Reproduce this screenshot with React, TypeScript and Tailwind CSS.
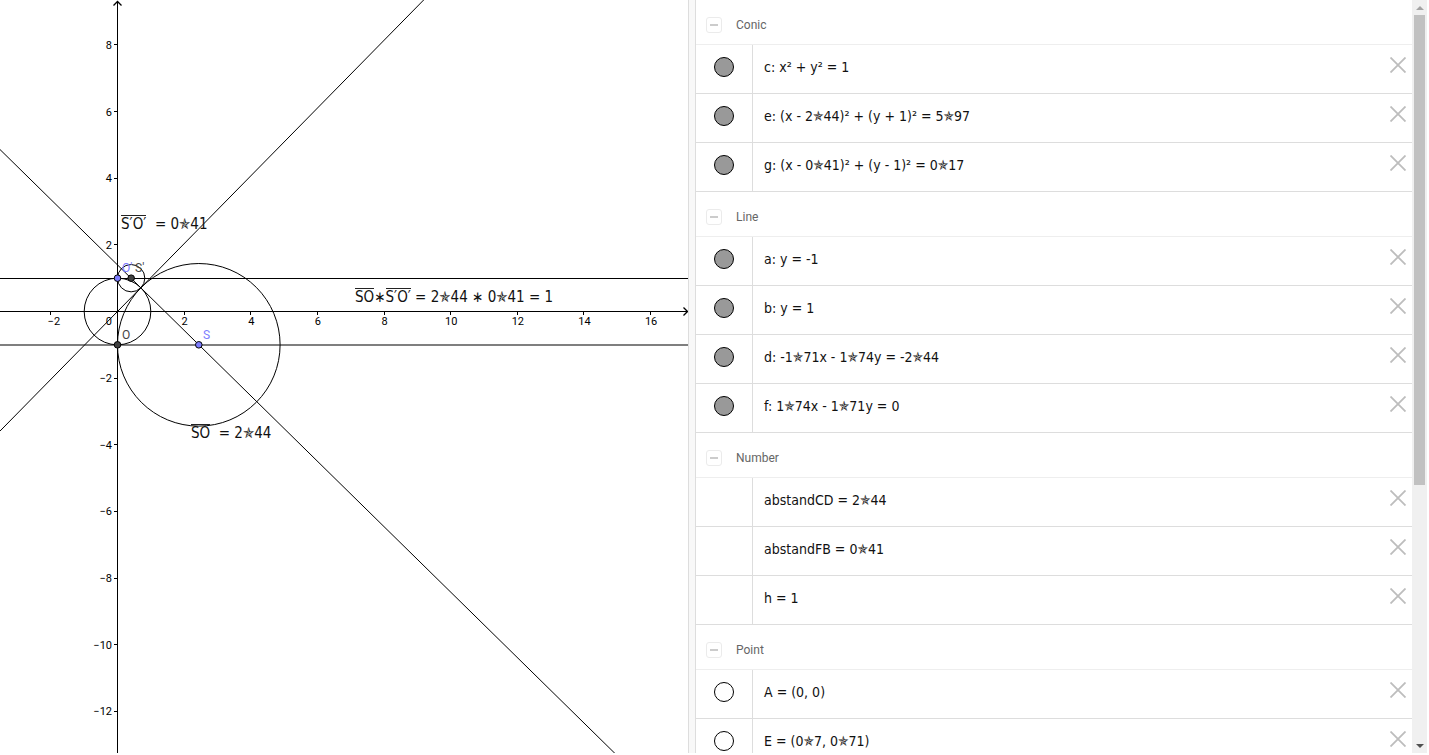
import type { ReactNode } from "react";

interface Item {
  text: string;
  shown?: boolean;
}

interface Group {
  title: string;
  items: Item[];
}

const GROUPS: Group[] = [
  {
    title: "Conic",
    items: [
      { text: "c: x² + y² = 1", shown: true },
      { text: "e: (x - 2✯44)² + (y + 1)² = 5✯97", shown: true },
      { text: "g: (x - 0✯41)² + (y - 1)² = 0✯17", shown: true },
    ],
  },
  {
    title: "Line",
    items: [
      { text: "a: y = -1", shown: true },
      { text: "b: y = 1", shown: true },
      { text: "d: -1✯71x - 1✯74y = -2✯44", shown: true },
      { text: "f: 1✯74x - 1✯71y = 0", shown: true },
    ],
  },
  {
    title: "Number",
    items: [{ text: "abstandCD = 2✯44" }, { text: "abstandFB = 0✯41" }, { text: "h = 1" }],
  },
  {
    title: "Point",
    items: [
      { text: "A = (0, 0)", shown: false },
      { text: "E = (0✯7, 0✯71)", shown: false },
    ],
  },
];

// Graphics view: origin and pixels per unit.
const OX = 117.5;
const OY = 311.5;
const UNIT = 33.32;
const px = (x: number) => OX + x * UNIT;
const py = (y: number) => OY - y * UNIT;
const crisp = (v: number) => Math.floor(v) + 0.5;

const X_TICKS = [-2, 2, 4, 6, 8, 10, 12, 14, 16];
const Y_TICKS = [8, 6, 4, 2, -2, -4, -6, -8, -10, -12];

const tickLabel = (n: number) => String(n).replace("-", "−");

const FORMULA = "whitespace-pre font-['DejaVu_Sans_Condensed','DejaVu_Sans',sans-serif] text-[#111]";

function Over({ children }: { children: ReactNode }) {
  return <span className="inline-block border-t border-[#222] leading-4">{children}</span>;
}

function Plot() {
  return (
    <svg className="absolute inset-0 h-full w-full" fill="none" stroke="#000">
      {/* axes */}
      <path d={`M${OX} 2V2000M0 ${OY}H4000`} />
      <path d="M113.5 5.5L117.5 1.5L121.5 5.5" strokeWidth="1.3" />
      {X_TICKS.map((n) => (
        <path key={n} d={`M${crisp(px(n))} ${OY}v3.5`} />
      ))}
      {Y_TICKS.map((n) => (
        <path key={n} d={`M${OX} ${crisp(py(n))}h-3.5`} />
      ))}
      <g className="font-[Roboto,sans-serif] text-[11px]" fill="#000" stroke="none">
        {X_TICKS.map((n) => (
          <text key={n} x={n < 0 ? px(n) + 3 : px(n) + 0.5} y="325" textAnchor="middle">
            {tickLabel(n)}
          </text>
        ))}
        {Y_TICKS.map((n) => (
          <text key={n} x="112" y={py(n) + 4} textAnchor="end">
            {tickLabel(n)}
          </text>
        ))}
        <text x="112" y="325" textAnchor="end">
          0
        </text>
      </g>

      <circle cx={OX} cy={OY} r={UNIT} />
      <circle cx={px(2.44)} cy={py(-1)} r={2.44 * UNIT} />
      <circle cx={px(0.41)} cy={py(1)} r={0.41 * UNIT} />
      <path d="M0 278.5H4000" />
      <path d="M0 345H4000" strokeWidth="1.2" />
      <line x1="0" y1={py(1.398 + (OX / UNIT) * 0.982)} x2={px(40)} y2={py(1.398 - 40 * 0.982)} />
      <line x1="0" y1={py((-OX / UNIT) * 1.0175)} x2={px(40)} y2={py(40 * 1.0175)} />

      <circle cx={px(0.41)} cy={py(1)} r="3.3" fill="#404040" />
      <circle cx={OX} cy={py(1)} r="3.3" fill="#7d7dff" />
      <circle cx={OX} cy={py(-1)} r="3.3" fill="#404040" />
      <circle cx={px(2.44)} cy={py(-1)} r="3.3" fill="#7d7dff" />

      <g className="font-[Roboto,sans-serif] text-[12px]" stroke="none">
        <text x="122" y="272" fill="#7d7dff">
          O'
        </text>
        <text x="135" y="272" fill="#444">
          S'
        </text>
        <text x="122" y="339" fill="#444">
          O
        </text>
        <text x="203" y="339" fill="#7d7dff">
          S
        </text>
      </g>
    </svg>
  );
}

function GraphicsView() {
  return (
    <section aria-label="Graphics" className="relative min-w-0 flex-[689] overflow-hidden border-r border-[#ddd]">
      <Plot />
      <svg className="absolute right-0 top-[306px] h-[11px] w-[6px]" fill="none" stroke="#000" strokeWidth="1.3">
        <path d="M1.5 1.5L5.5 5.5L1.5 9.5" />
      </svg>
      <div className={`absolute left-[121px] top-[215px] text-[15px] leading-4 ${FORMULA}`}>
        <Over>S′O′</Over>
        {"  = 0✯41"}
      </div>
      <div className={`absolute left-[191px] top-[424px] text-[15px] leading-4 ${FORMULA}`}>
        <Over>SO</Over>
        {"  = 2✯44"}
      </div>
      <div className={`absolute left-[355px] top-[288px] text-[15px] leading-4 ${FORMULA}`}>
        <Over>SO</Over>∗<Over>S′O′</Over> = 2✯44 ∗ 0✯41 = 1
      </div>
    </section>
  );
}

function Row({ item }: { item: Item }) {
  return (
    <li className="flex h-[49px] border-b border-[#ddd]">
      <div className="flex w-[57px] shrink-0 justify-center border-r border-[#ddd] pt-3">
        {item.shown !== undefined && (
          <button
            type="button"
            aria-label="Show or hide"
            aria-pressed={item.shown}
            className={`size-5 rounded-full border border-black ${item.shown ? "bg-[#999]" : "bg-white"}`}
          />
        )}
      </div>
      <p className={`min-w-0 flex-1 overflow-hidden pl-[11px] pt-3 text-[14px] leading-5 ${FORMULA}`}>{item.text}</p>
      <button type="button" aria-label="Delete" className="mr-1.5 mt-3 size-4 shrink-0">
        <svg viewBox="0 0 16 16" className="size-4" stroke="#bdbdbd" strokeWidth="1.8">
          <path d="M0.5 0.5L15.5 15.5M15.5 0.5L0.5 15.5" />
        </svg>
      </button>
    </li>
  );
}

function AlgebraView() {
  return (
    <section aria-label="Algebra" className="min-w-0 flex-1 overflow-hidden">
      {GROUPS.map((group) => (
        <div key={group.title}>
          <div className="flex h-[45px] items-end gap-[14px] border-b border-[#eee] pb-[11px] pl-2.5">
            <button
              type="button"
              aria-label="Collapse"
              className="flex size-4 items-center justify-center rounded-[3px] border border-[#ebebeb]"
            >
              <span className="h-0.5 w-2 bg-[#ccc]" />
            </button>
            <h2 className="font-[Roboto,sans-serif] text-xs leading-4 text-[#666]">{group.title}</h2>
          </div>
          <ul>
            {group.items.map((item) => (
              <Row key={item.text} item={item} />
            ))}
          </ul>
        </div>
      ))}
    </section>
  );
}

function ScrollBar() {
  return (
    <div className="flex w-[15px] shrink-0 flex-col bg-[#f0f0f0]">
      <button type="button" aria-label="Scroll up" className="flex h-[15px] items-center justify-center">
        <svg viewBox="0 0 8 4" className="h-1 w-2" fill="#a3a3a3">
          <path d="M0 4L4 0L8 4z" />
        </svg>
      </button>
      <div className="flex-1 px-0.5">
        <div className="h-[65%] bg-[#c1c1c1]" />
      </div>
      <button type="button" aria-label="Scroll down" className="flex h-[15px] items-center justify-center">
        <svg viewBox="0 0 8 4" className="h-1 w-2" fill="#505050">
          <path d="M0 0L4 4L8 0z" />
        </svg>
      </button>
    </div>
  );
}

export default function App() {
  return (
    <main className="h-screen overflow-hidden bg-white pb-0.5 pr-0.5">
      <div className="flex h-full">
        <GraphicsView />
        <div className="w-1.5 shrink-0 bg-[#f8f8f8]" />
        <div className="flex min-w-0 flex-[732] overflow-hidden border-l border-[#ddd]">
          <AlgebraView />
          <ScrollBar />
        </div>
      </div>
    </main>
  );
}
